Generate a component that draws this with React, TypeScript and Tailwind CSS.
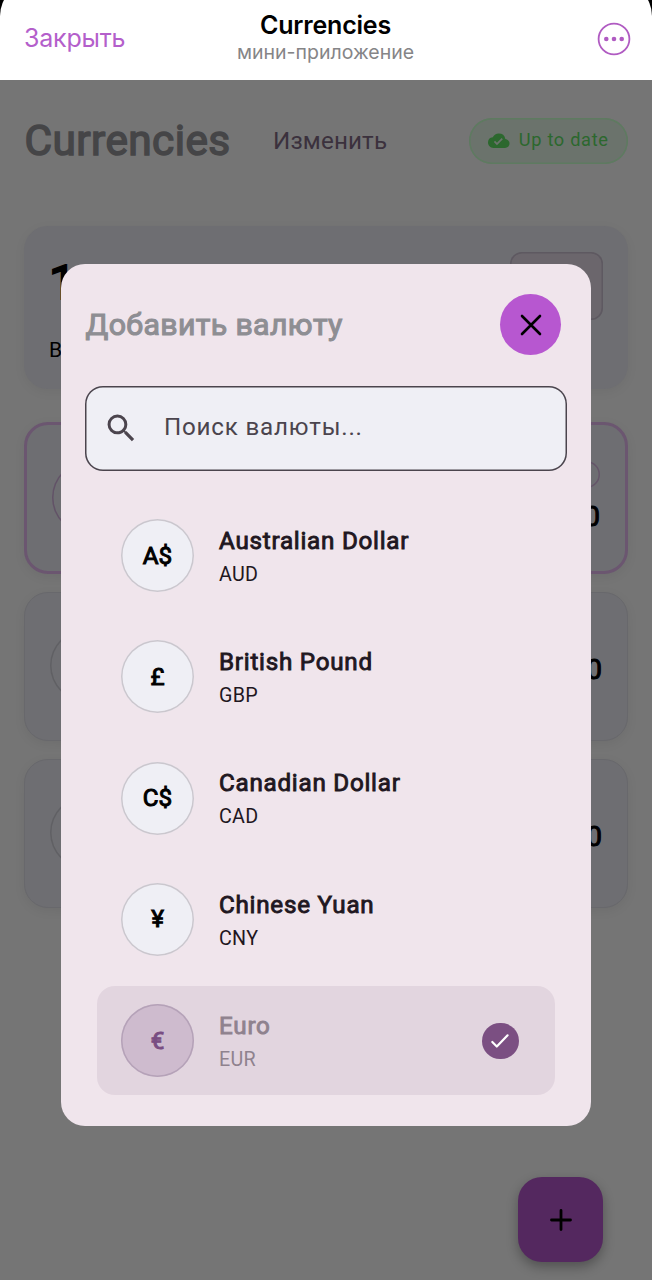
import React from 'react';
import { MdCloudDone, MdSearch } from 'react-icons/md';

interface Currency {
  code: string;
  name: string;
  symbol: string;
  added?: boolean;
}

const currencies: Currency[] = [
  { code: 'AUD', name: 'Australian Dollar', symbol: 'A$' },
  { code: 'GBP', name: 'British Pound', symbol: '£' },
  { code: 'CAD', name: 'Canadian Dollar', symbol: 'C$' },
  { code: 'CNY', name: 'Chinese Yuan', symbol: '¥' },
  { code: 'EUR', name: 'Euro', symbol: '€', added: true },
];

function TopBar() {
  return (
    <div className="h-[79.5px] shrink-0 overflow-hidden bg-black font-['Inter',sans-serif]">
      <div className="-mt-[18px] h-[98px] rounded-t-[34px] bg-white pt-[18px]">
        <div className="grid h-[79px] grid-cols-[1fr_auto_1fr] items-center pl-[24px] pr-[21px]">
          <span className="mt-[-3px] text-[25px] leading-none tracking-[-0.2px] text-[#b45fcb]">Закрыть</span>
          <div className="mt-[-4px] mr-[4px] flex flex-col items-center">
            <span className="text-[25px] leading-[30px] font-semibold tracking-[-0.2px] text-black">Currencies</span>
            <span className="text-[19.5px] leading-[25px] text-[#858587]">мини-приложение</span>
          </div>
          <svg viewBox="0 0 34 34" className="mt-[-2px] h-[34px] w-[34px] justify-self-end">
            <circle cx="17" cy="17" r="15.4" fill="none" stroke="#b05bc2" strokeWidth="1.8" />
            <circle cx="9.3" cy="17" r="2.3" fill="#b05bc2" />
            <circle cx="17" cy="17" r="2.3" fill="#b05bc2" />
            <circle cx="24.7" cy="17" r="2.3" fill="#b05bc2" />
          </svg>
        </div>
      </div>
    </div>
  );
}

function RateCard({ active }: { active?: boolean }) {
  return (
    <div
      className={`flex justify-between rounded-[24px] bg-[#6e6e72] shadow-[0_3px_12px_rgba(0,0,0,0.06)] ${
        active ? 'h-[152px] border-[3px] border-[#6b5670] px-[25px]' : 'h-[149px] border border-[#68686c] px-[25px]'
      }`}
    >
      <div
        className={`mt-[36px] h-[73px] w-[73px] rounded-full ${
          active ? 'shadow-[inset_0_0_0_1.5px_#625267]' : 'shadow-[inset_0_0_0_1.5px_#606064]'
        }`}
      />
      <div className="flex flex-col items-end">
        {active && <div className="mt-[36px] h-[27px] w-[60px] rounded-full shadow-[inset_0_0_0_1.5px_#655569]" />}
        <span
          className={`text-[28px] leading-8 text-black [-webkit-text-stroke:1px] ${active ? 'mt-[13px]' : 'mt-[61px]'}`}
        >
          0
        </span>
      </div>
    </div>
  );
}

function CurrencyRow({ currency }: { currency: Currency }) {
  const { code, name, symbol, added } = currency;
  return (
    <div
      className={`flex h-[109px] items-center rounded-[18px] pr-[36.5px] pl-[24px] ${added ? 'bg-[#e2d5df]' : ''}`}
    >
      <div
        className={`flex h-[73px] w-[73px] shrink-0 items-center justify-center rounded-full text-[24.2px] [-webkit-text-stroke:1px] ${
          added
            ? 'bg-[#cebbce] text-[#794d82] shadow-[inset_0_0_0_1.5px_#b5a2b8]'
            : 'bg-[#efeff5] text-black shadow-[inset_0_0_0_1.5px_#cbc7ce]'
        }`}
      >
        {symbol}
      </div>
      <div className={`mt-[3px] ml-[25px] flex flex-1 flex-col ${added ? 'text-[#8f828e]' : 'text-[#1f1721]'}`}>
        <span className="text-[24.2px] leading-[34px] tracking-[0.76px] [-webkit-text-stroke:0.9px]">{name}</span>
        <span className="text-[19.7px] leading-[33px] tracking-[0.3px]">{code}</span>
      </div>
      {added && (
        <div className="flex h-[36.5px] w-[36.5px] items-center justify-center rounded-full bg-[#7b4f82]">
          <svg viewBox="0 0 24 24" className="h-6 w-6" fill="none" stroke="white" strokeWidth="2.2" strokeLinecap="round" strokeLinejoin="round">
            <path d="M4.3 13 8.8 17.5 19.6 6.3" />
          </svg>
        </div>
      )}
    </div>
  );
}

function AddCurrencyDialog() {
  return (
    <div className="absolute top-[264.4px] left-[61px] flex h-[862px] w-[530px] flex-col rounded-[24px] bg-[#f0e5ec] px-6">
      <div className="mt-[30px] flex h-[61px] items-center justify-between pr-[6px]">
        <h2 className="ml-[0.5px] text-[30.3px] leading-none tracking-[0.36px] text-[#8e8e93] [-webkit-text-stroke:1.1px]">
          Добавить валюту
        </h2>
        <button className="flex h-[61px] w-[61px] items-center justify-center rounded-full bg-[#b757d0]">
          <svg viewBox="0 0 24 24" className="h-6 w-6" stroke="black" strokeWidth="2.6" strokeLinecap="round">
            <path d="M3 3 21 21M21 3 3 21" />
          </svg>
        </button>
      </div>

      <div className="mt-[30.4px] flex h-[85px] items-center rounded-[18px] bg-[#efeff5] pl-[18px] shadow-[inset_0_0_0_1.5px_#4b444d]">
        <MdSearch className="h-[36.5px] w-[36.5px] text-[#4b444d]" />
        <span className="mt-[-2px] ml-[24.5px] text-[24.2px] leading-none tracking-[0.78px] text-[#4b444d]">Поиск валюты...</span>
      </div>

      <div className="mx-3 mt-[30.4px] flex flex-col gap-[12.3px]">
        {currencies.map((currency) => (
          <CurrencyRow key={currency.code} currency={currency} />
        ))}
      </div>
    </div>
  );
}

export default function App() {
  return (
    <div className="relative flex h-[1280px] w-[652px] flex-col overflow-hidden bg-[#757575] font-['Roboto',sans-serif]">
      <TopBar />

      <div className="flex flex-1 flex-col px-6">
        <div className="mt-[38px] flex h-[46px] items-center">
          <h1 className="mt-[2px] w-[206px] pl-[0.5px] text-[42.4px] leading-none tracking-[0.4px] text-[#454547] [-webkit-text-stroke:1.5px]">
            Currencies
          </h1>
          <span className="mt-[1px] ml-[43px] text-[24.2px] leading-none tracking-[0.15px] text-[#3b313d]">Изменить</span>
          <div className="ml-auto flex h-[46px] w-[159px] items-center justify-center rounded-full bg-[#6b736c] text-[#2c682e] shadow-[inset_0_0_0_1.5px_#5e7b60]">
            <MdCloudDone className="h-[21.5px] w-[21.5px]" />
            <span className="ml-[9px] text-[18.2px] leading-none tracking-[0.7px]">Up to date</span>
          </div>
        </div>

        <div className="mt-[62px] flex h-[163px] justify-between rounded-[24px] bg-[#6e6e72] px-[25px] shadow-[0_3px_12px_rgba(0,0,0,0.05)]">
          <div className="flex flex-col items-start">
            <span className="mt-[29px] text-[48px] leading-[56px] text-black [-webkit-text-stroke:2px]">1</span>
            <span className="mt-[25px] text-[21px] leading-7 text-black">В</span>
          </div>
          <div className="mt-[26px] h-[68px] w-[93px] rounded-[12px] bg-[#6b666c] shadow-[inset_0_0_0_1.5px_#5e5961]" />
        </div>

        <div className="mt-[33px] flex flex-col gap-[18px]">
          <RateCard active />
          <RateCard />
          <RateCard />
        </div>
      </div>

      <button className="absolute right-[49px] bottom-[17.6px] flex h-[85px] w-[85px] items-center justify-center rounded-[24px] bg-[#54285f] shadow-[0_5px_12px_rgba(0,0,0,0.3)]">
        <svg viewBox="0 0 24 24" className="h-6 w-6" stroke="black" strokeWidth="2.8" strokeLinecap="round">
          <path d="M12 2.5V21.5M2.5 12H21.5" />
        </svg>
      </button>

      <AddCurrencyDialog />
    </div>
  );
}
